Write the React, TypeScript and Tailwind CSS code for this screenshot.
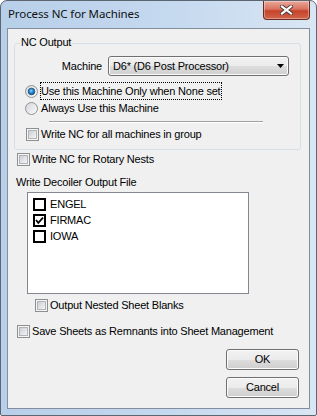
import React from 'react';

const Win7Check: React.FC = () => (
  <svg width="13" height="13" viewBox="0 0 13 13" className="shrink-0">
    <defs>
      <linearGradient id="cbInner" x1="0" y1="0" x2="1" y2="1">
        <stop offset="0" stopColor="#c9cdd3" />
        <stop offset="1" stopColor="#f7f7f7" />
      </linearGradient>
    </defs>
    <rect x="0.5" y="0.5" width="12" height="12" fill="#f5f5f5" stroke="#8e8f8f" />
    <rect x="2.5" y="2.5" width="8" height="8" fill="url(#cbInner)" stroke="#b0b4ba" />
  </svg>
);

const Win7Radio: React.FC<{ checked?: boolean }> = ({ checked }) => (
  <svg width="13" height="13" viewBox="0 0 13 13" className="shrink-0">
    <defs>
      <linearGradient id="rdOuter" x1="0" y1="0" x2="1" y2="1">
        <stop offset="0" stopColor="#d2d5da" />
        <stop offset="1" stopColor="#fbfbfb" />
      </linearGradient>
      <radialGradient id="rdDot" cx="0.45" cy="0.4" r="0.6">
        <stop offset="0" stopColor="#9ad4f7" />
        <stop offset="0.5" stopColor="#2a8ad4" />
        <stop offset="1" stopColor="#0f4f8a" />
      </radialGradient>
    </defs>
    <circle cx="6.5" cy="6.5" r="6" fill="url(#rdOuter)" stroke="#939393" />
    {checked && <circle cx="6.5" cy="6.5" r="3.3" fill="url(#rdDot)" stroke="#1b4f7e" strokeWidth="0.8" />}
  </svg>
);

const ListCheck: React.FC<{ checked?: boolean }> = ({ checked }) => (
  <svg width="13" height="13" viewBox="0 0 13 13" className="shrink-0">
    <rect x="1" y="1" width="11" height="11" fill="white" stroke="black" strokeWidth="2" />
    {checked && <path d="M3 6 L5.3 8.8 L10 3.6" fill="none" stroke="black" strokeWidth="1.8" />}
  </svg>
);

const Win7Button: React.FC<{ label: string; className?: string }> = ({ label, className }) => (
  <button
    type="button"
    className={`w-[73px] h-[21px] rounded-[3px] border border-[#707070] shadow-[inset_0_0_0_1px_#fcfcfc] bg-[linear-gradient(to_bottom,#f2f2f2_0%,#ebebeb_50%,#dddddd_51%,#cfcfcf_100%)] text-[11px] leading-[19px] tracking-[-0.2px] text-black ${className ?? ''}`}
  >
    {label}
  </button>
);

const decoilers = [
  { name: 'ENGEL', checked: false },
  { name: 'FIRMAC', checked: true },
  { name: 'IOWA', checked: false },
];

export default function App() {
  return (
    <div className="w-[317px] h-[416px] bg-white font-['Liberation_Sans',Arial,sans-serif] text-[11px] tracking-[-0.2px] text-black leading-[13px]">
      <div className="w-full h-full flex flex-col border border-[#5c6570] rounded-t-[7px] rounded-b-[2px] bg-[linear-gradient(to_right,#b8cfe9_0%,#c5d9ef_55%,#d9e6f4_100%)] px-[6px] pb-[6px]">
        {/* title bar */}
        <div className="h-[27px] flex items-start">
          <div className="pt-[5px] pl-[1px] text-[11.5px] tracking-[-0.1px] leading-[16px] font-['Noto_Sans',sans-serif] text-[#111]">Process NC for Machines</div>
          <div className="ml-auto w-[47px] h-[19px] rounded-b-[4px] border border-t-0 border-[#6b2a22] bg-[linear-gradient(to_bottom,#e8a99c_0%,#d9735f_45%,#c6432b_55%,#d0654a_100%)] shadow-[inset_0_0_0_1px_rgba(255,255,255,0.35)] flex items-center justify-center">
            <svg width="13" height="10" viewBox="0 0 13 10">
              <path d="M2 1.5 L11 8.5 M11 1.5 L2 8.5" stroke="#4a3a38" strokeWidth="4" strokeLinecap="square" />
              <path d="M2 1.5 L11 8.5 M11 1.5 L2 8.5" stroke="#ffffff" strokeWidth="2.2" strokeLinecap="square" />
            </svg>
          </div>
        </div>

        {/* client area */}
        <div className="flex-1 border border-[#838f9e] bg-[#f0f0f0] flex flex-col">
          {/* NC Output group */}
          <div className="relative mt-[14px] ml-[6px] w-[287px] h-[107px] shrink-0 border border-[#d5dfe5] rounded-[3px] flex flex-col">
            <span className="absolute -top-[8px] left-[5px] px-[1px] bg-[#f0f0f0] leading-[13px]">NC Output</span>

            <div className="mt-[12px] flex items-center">
              <span className="w-[93px] pr-[6px] text-right">Machine</span>
              <div className="w-[181px] h-[20px] rounded-[3px] border border-[#707070] shadow-[inset_0_0_0_1px_#fcfcfc] bg-[linear-gradient(to_bottom,#f2f2f2_0%,#ebebeb_50%,#dddddd_51%,#cfcfcf_100%)] flex items-center pl-[4px]">
                <span>D6* (D6 Post Processor)</span>
                <svg width="7" height="4" viewBox="0 0 7 4" className="ml-auto mr-[4px]">
                  <path d="M0 0 H7 L3.5 4 Z" fill="black" />
                </svg>
              </div>
            </div>

            <div className="mt-[6px] h-[18px] flex items-center pl-[10px]">
              <Win7Radio checked />
              <span className="ml-[2px] h-[18px] border border-dotted border-black pr-[1px] leading-[16px]">Use this Machine Only when None set</span>
            </div>
            <div className="h-[17px] flex items-center pl-[10px]">
              <Win7Radio />
              <span className="ml-[3px]">Always Use this Machine</span>
            </div>

            <div className="mt-[4px] ml-[34px] w-[214px] border-t border-b border-t-[#a0a0a0] border-b-white" />

            <div className="mt-[3px] h-[17px] flex items-center gap-[2px] pl-[11px]">
              <Win7Check />
              <span>Write NC for all machines in group</span>
            </div>
          </div>

          <div className="mt-[1px] h-[17px] flex items-center gap-[2px] pl-[9px]">
            <Win7Check />
            <span>Write NC for Rotary Nests</span>
          </div>

          <div className="mt-[6px] h-[17px] flex items-center pl-[8px]">Write Decoiler Output File</div>

          <div className="mt-[1px] ml-[19px] w-[222px] h-[102px] shrink-0 border border-[#828790] bg-white pt-[3px] pl-[5px] flex flex-col">
            {decoilers.map((d) => (
              <div key={d.name} className="h-[16px] flex items-center gap-[4px]">
                <ListCheck checked={d.checked} />
                <span>{d.name}</span>
              </div>
            ))}
          </div>

          <div className="mt-[3px] h-[17px] flex items-center gap-[2px] pl-[27px]">
            <Win7Check />
            <span>Output Nested Sheet Blanks</span>
          </div>

          <div className="mt-[9px] h-[17px] flex items-center gap-[2px] pl-[9px]">
            <Win7Check />
            <span>Save Sheets as Remnants into Sheet Management</span>
          </div>

          <Win7Button label="OK" className="mt-[9px] self-end mr-[10px]" />
          <Win7Button label="Cancel" className="mt-[7px] self-end mr-[10px]" />
        </div>
      </div>
    </div>
  );
}
